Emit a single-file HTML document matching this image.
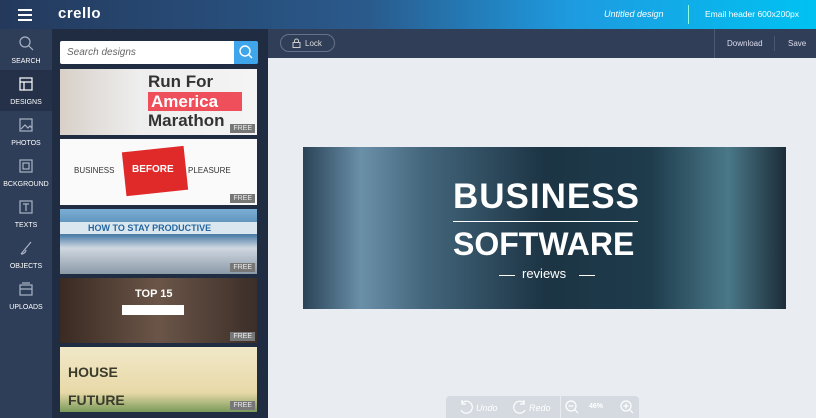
<!DOCTYPE html><html><head><style>
*{margin:0;padding:0;box-sizing:border-box}
body{width:816px;height:418px;overflow:hidden;font-family:"Liberation Sans",sans-serif;background:#e9edf1;position:relative}
.hdr{position:absolute;left:0;top:0;width:816px;height:29px;background:linear-gradient(90deg,#24395c 0%,#2a5a8c 45%,#1e9be0 70%,#00c2f2 100%)}
.side{position:absolute;left:0;top:29px;width:52px;height:389px;background:#2e3d58}
.item{position:absolute;left:0;width:52px;height:41px;color:#fff;font-size:7px;text-align:center}
.item span{position:absolute;bottom:5px;left:0;right:0}
.item svg{position:absolute;left:17px;top:5px}
.panel{position:absolute;left:52px;top:29px;width:216px;height:389px;background:#202c41}
.thumb{position:absolute;left:60px;width:197px;overflow:hidden}
.free{position:absolute;right:2px;bottom:2px;background:#777;color:#eee;font-size:7px;padding:1px 3px}
.tb{position:absolute;left:268px;top:29px;width:548px;height:29px;background:#303e58}
</style></head><body>
<div class="hdr">
<div style="position:absolute;left:18px;top:9px;width:14px;height:2px;background:#fff;box-shadow:0 5px 0 #fff,0 10px 0 #fff"></div>
<div style="position:absolute;left:58px;top:5px;color:#fff;font-weight:bold;font-size:15px;letter-spacing:0.5px">crello</div>
<div style="position:absolute;left:604px;top:9px;color:#fff;font-size:9px;font-style:italic">Untitled design</div>
<div style="position:absolute;left:688px;top:5px;width:1px;height:19px;background:#8fd"></div>
<div style="position:absolute;left:705px;top:9px;color:#fff;font-size:8.5px">Email header 600x200px</div>
</div>
<div class="side">
<div class="item" style="top:0"><svg width="18" height="18" fill="none" stroke="#a9b3c3" stroke-width="1.2"><circle cx="8" cy="8" r="5"/><path d="M12 12l4 4"/></svg><span>SEARCH</span></div>
<div class="item" style="top:41px;background:#243149"><svg width="18" height="18" fill="none" stroke="#fff" stroke-width="1.2"><rect x="3" y="3" width="12" height="12"/><path d="M3 7h12M7 7v8"/></svg><span>DESIGNS</span></div>
<div class="item" style="top:82px"><svg width="18" height="18" fill="none" stroke="#a9b3c3" stroke-width="1.2"><rect x="3" y="3" width="12" height="12"/><path d="M4 13l4-4 3 3 2-2 2 2"/></svg><span>PHOTOS</span></div>
<div class="item" style="top:123px"><svg width="18" height="18" fill="none" stroke="#a9b3c3" stroke-width="1.2"><rect x="3" y="3" width="12" height="12"/><rect x="6" y="6" width="6" height="6"/></svg><span>BCKGROUND</span></div>
<div class="item" style="top:164px"><svg width="18" height="18" fill="none" stroke="#a9b3c3" stroke-width="1.2"><rect x="3" y="3" width="12" height="12"/><path d="M6 6h6M9 6v7"/></svg><span>TEXTS</span></div>
<div class="item" style="top:205px"><svg width="18" height="18" fill="none" stroke="#a9b3c3" stroke-width="1.2"><path d="M4 15l10-12M4 15c3 0 5-2 5-4"/></svg><span>OBJECTS</span></div>
<div class="item" style="top:246px"><svg width="18" height="18" fill="none" stroke="#a9b3c3" stroke-width="1.2"><rect x="3" y="5" width="12" height="10"/><path d="M5 3h8M3 9h12"/></svg><span>UPLOADS</span></div>
</div>
<div class="panel"></div>
<div style="position:absolute;left:60px;top:41px;width:174px;height:23px;background:#fff;border-radius:2px 0 0 2px;font-size:10px;font-style:italic;color:#666;padding:6px 7px">Search designs</div>
<div style="position:absolute;left:234px;top:41px;width:24px;height:23px;background:#3fa6ec;border-radius:0 2px 2px 0"><svg width="24" height="23" fill="none" stroke="#fff" stroke-width="1.4"><circle cx="11" cy="10" r="5"/><path d="M15 14l3 3"/></svg></div>
<div class="thumb" style="top:69px;height:66px;background:linear-gradient(90deg,#d8d0c8,#eee 40%,#f4f4f4)">
<div style="position:absolute;left:88px;top:3px;font-size:17px;font-weight:bold;color:#333;line-height:20px">Run For</div>
<div style="position:absolute;left:88px;top:23px;width:94px;height:19px;background:#ef4e5b;color:#fff;font-size:17px;font-weight:bold;padding-left:3px;line-height:19px">America</div>
<div style="position:absolute;left:88px;top:42px;font-size:17px;font-weight:bold;color:#333;line-height:20px">Marathon</div><div class="free">FREE</div></div>
<div class="thumb" style="top:139px;height:66px;background:#fafafa">
<div style="position:absolute;left:14px;top:27px;font-size:8px;color:#333">BUSINESS</div>
<div style="position:absolute;left:64px;top:10px;width:62px;height:44px;background:#e02a2a;transform:rotate(-6deg)"></div>
<div style="position:absolute;left:72px;top:25px;font-size:10px;color:#fff;font-weight:bold">BEFORE</div>
<div style="position:absolute;left:128px;top:27px;font-size:8px;color:#333">PLEASURE</div><div class="free">FREE</div></div>
<div class="thumb" style="top:209px;height:65px;background:linear-gradient(180deg,#7aaed4,#4c7ea8 40%,#cfd7e0 60%,#8b9aa8)">
<div style="position:absolute;left:0;top:13px;width:197px;height:12px;background:#dbe7ef"></div>
<div style="position:absolute;left:28px;top:14px;font-size:9px;font-weight:bold;color:#2466a0">HOW TO STAY PRODUCTIVE</div><div class="free">FREE</div></div>
<div class="thumb" style="top:278px;height:65px;background:linear-gradient(90deg,#3a2a22,#6b5548 50%,#3b2e28)">
<div style="position:absolute;left:75px;top:10px;font-size:11px;font-weight:bold;color:#fff">TOP 15</div>
<div style="position:absolute;left:62px;top:27px;width:62px;height:10px;background:#fff"></div><div class="free">FREE</div></div>
<div class="thumb" style="top:347px;height:65px;background:linear-gradient(180deg,#f0e8c8,#e8d9a8 70%,#7a9a5a)">
<div style="position:absolute;left:8px;top:18px;font-size:14px;font-weight:bold;color:#3b3b2b;line-height:14px">HOUSE<br><br>FUTURE</div><div class="free">FREE</div></div>
<div class="tb">
<div style="position:absolute;left:12px;top:5px;width:55px;height:18px;border:1px solid #66738a;border-radius:9px;color:#ddd;font-size:8px;padding:4px 0 0 24px">Lock</div>
<svg style="position:absolute;left:24px;top:9px" width="9" height="10" fill="none" stroke="#ccc" stroke-width="1"><rect x="1" y="4.5" width="7" height="5"/><path d="M2.5 4.5V3a2 2 0 0 1 4 0v1.5"/></svg>
<div style="position:absolute;left:446px;top:0;width:1px;height:29px;background:#4b5870"></div>
<div style="position:absolute;left:459px;top:10px;color:#dde;font-size:8px">Download</div>
<div style="position:absolute;left:506px;top:7px;width:1px;height:15px;background:#4b5870"></div>
<div style="position:absolute;left:520px;top:10px;color:#dde;font-size:8px">Save</div>
</div>
<div style="position:absolute;left:303px;top:147px;width:483px;height:162px;background:linear-gradient(90deg,#2a4256 0%,#6a90a8 12%,#44667c 25%,#1c3444 50%,#1e3c4c 72%,#4a7888 88%,#1c2c38)">
<div style="position:absolute;left:150px;top:31px;color:#fff;font-size:35px;font-weight:bold;letter-spacing:1px;line-height:38px">BUSINESS</div>
<div style="position:absolute;left:150px;top:74px;width:185px;height:1px;background:#fff"></div>
<div style="position:absolute;left:150px;top:79px;color:#fff;font-size:32px;font-weight:bold;line-height:36px">SOFTWARE</div>
<div style="position:absolute;left:196px;top:128px;width:16px;height:1px;background:#fff"></div>
<div style="position:absolute;left:219px;top:119px;color:#fff;font-size:13px">reviews</div>
<div style="position:absolute;left:276px;top:128px;width:16px;height:1px;background:#fff"></div>
</div>
<div style="position:absolute;left:446px;top:396px;width:193px;height:22px;background:#d5dae0;border-radius:4px 4px 0 0;color:#fff;font-size:9px;font-style:italic">
<svg style="position:absolute;left:12px;top:4px" width="16" height="14" fill="none" stroke="#fff" stroke-width="1.2"><path d="M4 3a6 6 0 1 1-1 7M4 0v4h4"/></svg>
<span style="position:absolute;left:30px;top:7px">Undo</span>
<svg style="position:absolute;left:66px;top:4px" width="16" height="14" fill="none" stroke="#fff" stroke-width="1.2"><path d="M12 3a6 6 0 1 0 1 7M12 0v4H8"/></svg>
<span style="position:absolute;left:83px;top:7px">Redo</span>
<div style="position:absolute;left:114px;top:0;width:1px;height:22px;background:#e8ecf0"></div>
<svg style="position:absolute;left:119px;top:4px" width="14" height="14" fill="none" stroke="#fff" stroke-width="1.2"><circle cx="6" cy="6" r="5"/><path d="M3.5 6h5M10 10l3 3"/></svg>
<span style="position:absolute;left:143px;top:7px;font-size:7px;font-style:normal;font-weight:bold">46%</span>
<svg style="position:absolute;left:174px;top:4px" width="14" height="14" fill="none" stroke="#fff" stroke-width="1.2"><circle cx="6" cy="6" r="5"/><path d="M3.5 6h5M6 3.5v5M10 10l3 3"/></svg>
</div>
</body></html>
